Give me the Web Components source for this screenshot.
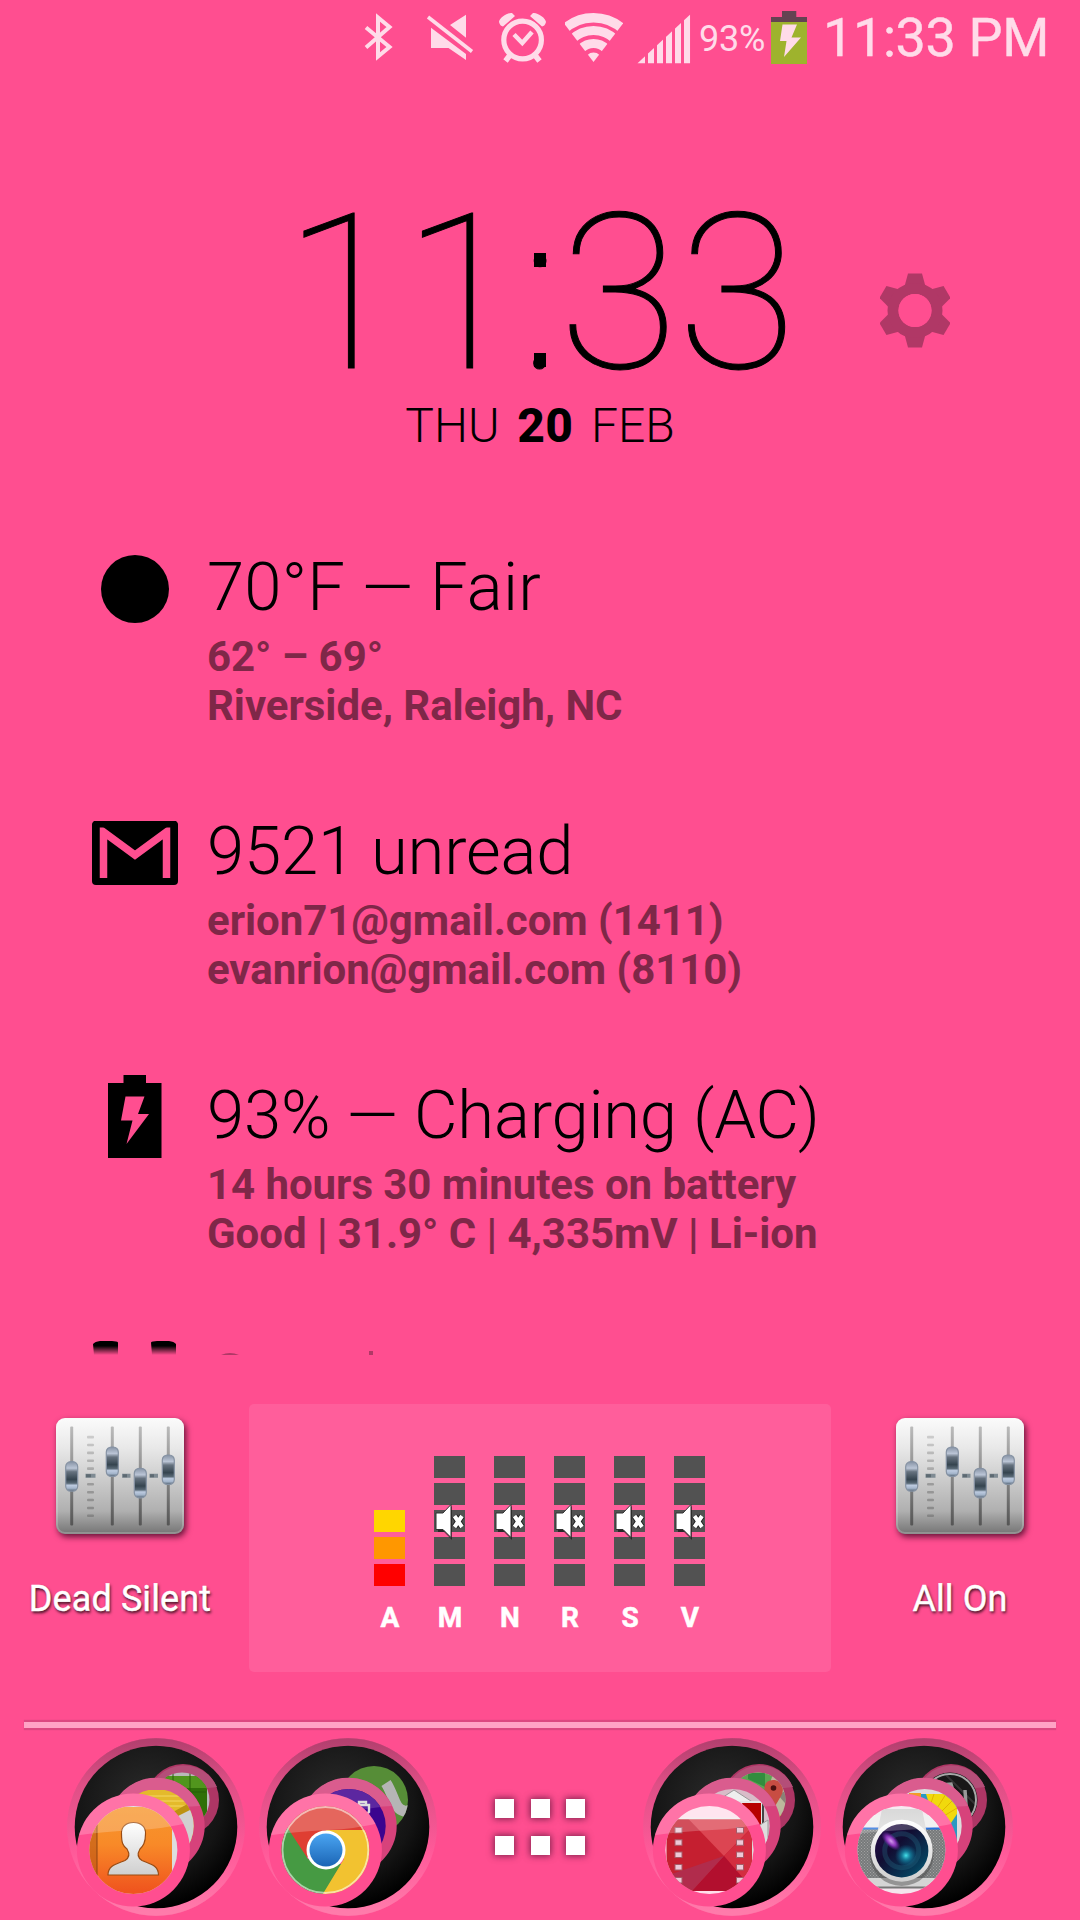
<!DOCTYPE html>
<html lang="en">
<head>
<meta charset="utf-8">
<title>Home screen</title>
<style>
  body {
    margin: 0;
    background: #ff4e90;
    font-family: Roboto, "Noto Sans", sans-serif;
  }
</style>
</head>
<body>
<home-screen></home-screen>

<script>
class StatusBar extends HTMLElement {
  constructor() {
    super();
    this.attachShadow({ mode: 'open' });
  }

  connectedCallback() {
    this.shadowRoot.innerHTML = `
      <style>
        :host {
          display: flex;
          height: 76px;
          padding-left: 364px;
          color: #ffdbe9;
          white-space: nowrap;
        }
        svg { display: block; flex: none; height: 76px; }
        .level { width: 71px; margin-left: 8px; font-size: 36px; line-height: 79px; letter-spacing: -0.2px; }
        .time { margin-left: 16px; font-size: 54px; line-height: 75px; letter-spacing: -0.4px; -webkit-text-stroke: 0.4px currentColor; }
      </style>
      <svg width="30" viewBox="364 0 30 76" fill="none" stroke="currentColor" stroke-width="4">
        <path d="M366 27.5 389.500 47 378 56.500V17.500L389.500 27 366 47.500"/>
      </svg>
      <svg width="48" style="margin-left:32px" viewBox="426 0 48 76" fill="currentColor">
        <path d="M450 25 466 14.700V37.700ZM431 27.700 466 54V60L448.500 48H431Z"/>
        <path d="M428 17 472 51.500" stroke="currentColor" stroke-width="3.600"/>
      </svg>
      <svg width="48" style="margin-left:24px" viewBox="498 0 48 76" fill="none" stroke="currentColor">
        <circle cx="522.600" cy="40" r="18.800" stroke-width="5.200"/>
        <path d="M514 34.500 522.300 43 532 32" stroke-width="4.500"/>
        <path d="M510.500 54.500 505.500 61M534.500 54.500 539.500 61" stroke-width="5.500"/>
        <path d="M499 22C499 18 508 12 512 13L515 16 503 26.500Q500 26 499 22ZM546 22C546 18 537 12 533 13L530 16 542 26.500Q545 26 546 22Z" fill="currentColor" stroke="none"/>
      </svg>
      <svg width="58" style="margin-left:19px" viewBox="565 0 58 76" fill="none" stroke="currentColor">
        <clipPath id="fan"><path d="M593.500 62 557.500 15V5H629.500V15Z"/></clipPath>
        <g clip-path="url(#fan)">
          <circle cx="593.500" cy="61" r="43.300" stroke-width="9.400"/>
          <circle cx="593.500" cy="61" r="30.500" stroke-width="9"/>
          <circle cx="593.500" cy="61" r="17.500" stroke-width="9"/>
          <circle cx="593.500" cy="61" r="8.500" fill="currentColor" stroke="none"/>
        </g>
      </svg>
      <svg width="54" style="margin-left:14px" viewBox="637 0 54 76" fill="currentColor">
        <clipPath id="ramp"><path d="M637.500 63.200 690.200 14.500V63.200Z"/></clipPath>
        <path clip-path="url(#ramp)" d="M637 0h8v64h-8zM648 0h6v64h-6zM657 0h6v64h-6zM666 0h6v64h-6zM675 0h6v64h-6zM684 0h6.200v64h-6.200z"/>
      </svg>
      <span class="level">93%</span>
      <svg width="36" style="margin-left:1px" viewBox="771 0 36 76">
        <path fill="#644352" d="M782 11h14.300v6H807v5H771v-5h11z"/>
        <path fill="#9eb32d" d="M771 22h36v42h-36z"/>
        <path fill="#ffdbe9" d="M782.500 24.500H797L791.500 37.500H801L784 57 786.500 41H780Z"/>
      </svg>
      <span class="time">11:33 PM</span>
    `;
  }
}

class ClockFace extends HTMLElement {
  constructor() {
    super();
    this.attachShadow({ mode: 'open' });
  }

  connectedCallback() {
    this.shadowRoot.innerHTML = `
      <style>
        :host { display: block; height: 349px; padding-top: 109px; color: #000; white-space: nowrap; }
        .row { display: flex; align-items: flex-start; padding-left: 284px; }
        .time {
          width: 596px;
          font-size: 218px;
          line-height: 218px;
          font-weight: 100;
          letter-spacing: -0.8px;
          -webkit-text-stroke: 1px #000;
        }
        /* square off the dots of the colon */
        .colon {
          background:
            linear-gradient(#000, #000) center 87px / 12px 14px no-repeat,
            linear-gradient(#000, #000) center 187px / 12px 14px no-repeat;
        }
        .date { margin-top: -1px; text-align: center; font-size: 48px; line-height: 48px; font-weight: 300; word-spacing: 6px; }
        b { font-weight: 800; letter-spacing: 0.3px; }
        svg { display: block; margin-top: 88px; }
      </style>
      <div class="row">
        <div class="time">11<span class="colon">:</span>33</div>
        <svg width="70" height="75" viewBox="-35 -37.500 70 75" fill="#b03866">
          <path id="tooth" d="M-7-37H7L10.500-24 0-18-10.500-24Z"/>
          <use href="#tooth" transform="rotate(60)"/>
          <use href="#tooth" transform="rotate(120)"/>
          <use href="#tooth" transform="rotate(180)"/>
          <use href="#tooth" transform="rotate(240)"/>
          <use href="#tooth" transform="rotate(300)"/>
          <circle r="22" fill="none" stroke="#b03866" stroke-width="11"/>
          <circle r="16.500" fill="#ff4e90"/>
        </svg>
      </div>
      <div class="date">THU <b>20</b> FEB</div>
    `;
  }
}

class InfoRow extends HTMLElement {
  constructor() {
    super();
    this.attachShadow({ mode: 'open' });
  }

  connectedCallback() {
    this.shadowRoot.innerHTML = `
      <style>
        :host {
          display: grid;
          grid-template-columns: 135px 1fr;
          height: 264px;
          padding-left: 72px;
          white-space: nowrap;
        }
        .icon { display: flex; justify-content: center; height: 69px; align-items: center; width: 126px; }
        .title { font-size: 67px; line-height: 67px; font-weight: 300; color: #000; letter-spacing: var(--title-spacing, 0); }
        .details { margin-top: 11px; font-size: 42px; line-height: 49px; font-weight: 700; color: #7f2748; letter-spacing: -0.05px; }
        ::slotted(*) { display: block; flex: none; }
      </style>
      <div class="icon"><slot name="icon"></slot></div>
      <div>
        <div class="title"><slot name="title"></slot></div>
        <div class="details"><slot></slot></div>
      </div>
    `;
  }
}

class MixerShortcut extends HTMLElement {
  constructor() {
    super();
    this.attachShadow({ mode: 'open' });
  }

  connectedCallback() {
    const knobs = [[15.700, 43.700], [56.300, 29], [84.300, 50.300], [112.300, 37]];
    const ticks = [0, 1, 2, 3, 4, 6, 7, 8, 9, 10];
    this.shadowRoot.innerHTML = `
      <style>
        :host { display: flex; flex-direction: column; align-items: center; padding-top: 14px; }
        svg { display: block; overflow: visible; filter: drop-shadow(2px 3px 3px rgba(50, 0, 25, 0.75)); }
        .label {
          margin-top: 47px;
          font-size: 36px;
          line-height: 36px;
          color: #fff;
          letter-spacing: 0.1px;
          white-space: nowrap;
          -webkit-text-stroke: 0.4px #fff;
          text-shadow: 1px 2px 3px rgba(0, 0, 0, 0.8);
        }
      </style>
      <svg width="128" height="116" viewBox="0 0 128 116">
        <defs>
          <linearGradient id="plate" x2="0" y2="1">
            <stop offset="0" stop-color="#fbfbfb"/><stop offset=".25" stop-color="#e9e9e9"/>
            <stop offset=".8" stop-color="#b0b0b0"/><stop offset="1" stop-color="#747474"/>
          </linearGradient>
          <linearGradient id="knob" x2="0" y2="1">
            <stop offset="0" stop-color="#8793a5"/><stop offset=".22" stop-color="#bbc5d6"/>
            <stop offset=".34" stop-color="#66727f"/><stop offset=".6" stop-color="#35444f"/>
            <stop offset=".73" stop-color="#596976"/><stop offset=".8" stop-color="#bdcbe0"/>
            <stop offset=".9" stop-color="#a4b5cb"/><stop offset="1" stop-color="#536373"/>
          </linearGradient>
          <linearGradient id="rail" x2="0" y2="1">
            <stop offset="0" stop-color="#bbb"/><stop offset="1" stop-color="#555"/>
          </linearGradient>
        </defs>
        <rect width="128" height="116" rx="9" fill="url(#plate)"/>
        <rect x="1" y="1" width="126" height="114" rx="8" fill="none" stroke="#fff" stroke-opacity=".2" stroke-width="2"/>
        ${ticks.map((i) => `<rect x="31" y="${17.800 + i * 7.870}" width="7" height="2.600" rx="1" fill="#777" opacity="${0.3 + i * 0.04}"/>`).join('')}
        <path d="M29.500 57.700h10M66 57.700h8.500M93.500 57.700h8.500" stroke="#7f8b93" stroke-width="4"/>
        <path d="M30 57.700h5M67 57.700h4M94 57.700h4" stroke="#5d6a72" stroke-width="3"/>
        ${knobs.map(([x, y]) => `
          <rect x="${x - 1.500}" y="8.500" width="3" height="99" rx="1" fill="url(#rail)"/>
          <rect x="${x - 6}" y="${y}" width="12" height="29.500" rx="5" fill="url(#knob)" stroke="#8592a3" stroke-width="1.200"/>
        `).join('')}
      </svg>
      <div class="label"><slot></slot></div>
    `;
  }
}

class VolumeMeter extends HTMLElement {
  constructor() {
    super();
    this.attachShadow({ mode: 'open' });
  }

  connectedCallback() {
    const muted = this.hasAttribute('muted');
    const colors = muted
      ? ['#525252', '#525252', '#525252', '#525252', '#525252']
      : ['transparent', 'transparent', '#ffd600', '#ff9700', '#ff0000'];
    this.shadowRoot.innerHTML = `
      <style>
        :host { display: block; width: 31px; }
        .stack { display: grid; gap: 5px; position: relative; }
        .stack i { height: 22px; }
        .label {
          margin: 18px -10px 0 -8px;
          text-align: center;
          font-size: 28px;
          line-height: 28px;
          font-weight: 700;
          color: #fff;
          -webkit-text-stroke: 0.5px #fff;
        }
        svg { position: absolute; left: 0; top: 46px; }
      </style>
      <div class="stack">
        ${colors.map((color) => `<i style="background:${color}"></i>`).join('')}
        ${muted ? `
          <svg width="34" height="40" viewBox="0 0 34 40">
            <path d="M3 11H9L17 3V37L9 29H3Z" fill="#000" opacity=".5" transform="translate(1 1)"/>
            <path d="M2 11H9L17 2.500V35.500L9 27.500H2Z" fill="#fff" stroke="#333" stroke-width="1"/>
            <path d="M20.500 14 28 25M28 14 20.500 25" stroke="#222" stroke-width="6"/>
            <path d="M20.500 14 28 25M28 14 20.500 25" stroke="#fff" stroke-width="4"/>
          </svg>` : ''}
      </div>
      <div class="label"><slot></slot></div>
    `;
  }
}

// Artwork of each folder, back to front; every disc is clipped by its own circle
const folderArt = {
  people: {
    back: `<path fill="#b9b9b9" d="M90 35h55v55H90z"/><rect x="88" y="39" width="53" height="60" rx="6" fill="#2f7008"/>
      <path fill="#51951d" d="M88 39h53v12H88z"/><path d="M107 36v50M124 36v50M90 55h50" stroke="#265c08"/>`,
    middle: `<path fill="#e4ba2b" d="M60 53h70v60H60z"/><path d="M60 59h65M60 64h65M60 69h65" stroke="#f5d764"/>
      <path fill="#bd9211" d="M98 80 125 65V80L107 83z"/><path fill="#d0d0d0" d="M102 84 130 70V120H90z"/>`,
    front: `<path fill="#ddd" d="M20 65h100v95H20z"/><path fill="url(#orange)" d="M20 70h84q2 0 2 3v90H20z"/>
      <path fill="#b45612" opacity=".55" d="M20 70h11v90H20z"/><path d="M31 70v90" stroke="#8e4512"/>
      <path d="M67.500 85.500C75 85.500 80 90 79.500 97 79.500 106 77 109 74 112 71 117 72 121 76 123.500 84 127 92.500 128 92.500 138H42C42 128 51 127 59 123.500 63 121 64 117 61 112 57 109 55.500 106 55.500 97 55 90 60 85.500 67.500 85.500Z" fill="url(#silver)" stroke="#9a4c13" stroke-width="1.200"/>`
  },
  web: {
    backPlain: true,
    back: `<path fill="#568d37" d="M70 20h90v90H70z"/><path d="M128 46C136 58 136 72 146 74 150 75 155 72 158 68" stroke="#b5b5b5" stroke-width="11" fill="none"/>`,
    middle: `<path fill="#3b048f" d="M40 40h100v100H40z"/><path fill="#5c27a0" d="M40 40h100v28Q100 72 80 78H40z"/>
      <path d="M96 68h15v7l-6 5M101 68v-3h7v3" fill="none" stroke="#ddd" stroke-width="2.400"/>`,
    front: `<path fill="#df3e32" d="M20 60h100v60H20z"/><path fill="#f2c230" d="M68 93H120V160H62L86 122Z"/>
      <path fill="#469a43" d="M20 78 29 90 50 122 83 127 63 160H20Z"/>
      <circle cx="68" cy="113" r="19.500" fill="#fff"/><circle cx="68" cy="113" r="16.500" fill="url(#blue)"/>
      <circle cx="67.400" cy="113" r="43" fill="none" stroke="#fff" stroke-opacity=".55" stroke-width="2"/>`
  },
  media: {
    back: `<path fill="#bcb79c" d="M80 30h80v80H80z"/><path fill="#5ca653" d="M80 30h53l-8 26-20 10z"/>
      <path fill="#328d3e" d="M106 36h17v14l-17-8z"/><path fill="#c3b238" d="M130 84 150 70V95H128z"/><path fill="#8a8276" d="M136 58 150 50V74z"/>
      <path fill="#c84d43" d="M131 43c10 0 12 10 8 16l-7 12-7-12c-5-7-3-16 6-16z"/><circle cx="131.500" cy="51" r="2.800" fill="#4c1010"/>`,
    middle: `<path fill="#d8bcc8" d="M40 40h100v100H40z"/><path fill="#eee" stroke="#999" d="M72 66 92 53 112 66z"/>
      <path fill="#e5e5e5" d="M90 64h31v30h-20z"/><path fill="#b70000" d="M100 66h19v24h-12z"/>
      <path d="M121 64v22" stroke="#444" stroke-width="2"/><path fill="#ddd" stroke="#999" d="M105 96 126 83V125z"/>`,
    front: `<path fill="#ffdfeb" d="M20 60h100v100H20z"/><path fill="#c51f30" d="M24.500 81.500h86V154h-86z"/>
      <path fill="#dc4552" d="M46 81.500h64.500v8L82 119z"/><path fill="#d32d40" d="M82 119 110.500 90v62z"/><path fill="#b20f2e" d="M82 119 112 154H50z"/>
      <path fill="#a93255" opacity=".75" d="M24 139 82 119 50 154H24z"/><path d="M25 81.500h85" stroke="#eee" stroke-width="1.500"/>
      <path d="M111 90v50" stroke="#ddd" stroke-width="2"/>
      ${[90.500, 102.800, 115, 127.500, 140.500].map((y) => `<rect x="33" y="${y}" width="7" height="5.500" fill="#edc8d7" stroke="#a55b66"/><rect x="94.500" y="${y}" width="7" height="5.500" fill="#edc8d7" stroke="#a55b66"/>`).join('')}`
  },
  camera: {
    back: `<path fill="#181818" d="M70 20h90v90H70z"/><path d="M90 45 135 90M98 38 143 83M110 36 145 71M84 54 120 90" stroke="#333" stroke-width="2"/>
      <circle cx="116" cy="63" r="26" fill="none" stroke="#a8a8a8" stroke-width="2"/>
      <path d="M105 48 117 47 119 54M131 53 132 68" fill="none" stroke="#999" stroke-width="3.500"/>`,
    middle: `<path fill="#ddd" d="M40 40h100v100H40z"/><path fill="#299ac2" d="M70 57h53v55H80z"/><path fill="#f29b27" d="M75 56h12v12H75z"/>
      <path fill="#f1d90d" d="M92 57h31v20l-8 12-14-3z"/><path d="M103 79 122 60M100 76 112 57M105 82 123 71M96 69 100 57" stroke="#e2b400"/>`,
    front: `<path fill="#f4e5ed" d="M20 60h100v100H20z"/><path fill="#777a7b" d="M20 92h100v50H20z"/>
      <path fill="url(#mesh)" d="M20 92h100v50H20z"/><path fill="#eee" d="M20 78h95v12H20z"/><path d="M24 91.500h88" stroke="#2673dd" stroke-width="2"/>
      <path fill="url(#hump)" d="M48 72h40l5 25H43z"/><path fill="#d5d5d5" d="M25 141h87v9H25z"/><path d="M30 150.500h75" stroke="#777" stroke-width="2"/>
      <circle cx="67.700" cy="117" r="32" fill="#444" opacity=".45"/><circle cx="67.700" cy="113.700" r="31" fill="url(#silver)"/>
      <circle cx="67.700" cy="113.700" r="26.700" fill="url(#lens)"/>
      <circle cx="67.700" cy="113.700" r="17" fill="none" stroke="#266882" stroke-opacity=".35" stroke-width="5"/>
      <ellipse cx="57" cy="104" rx="12" ry="6" transform="rotate(45 57 104)" fill="url(#violet)"/>
      <circle cx="72" cy="118.500" r="11" fill="url(#cyan)"/>`
  }
};

class AppFolder extends HTMLElement {
  constructor() {
    super();
    this.attachShadow({ mode: 'open' });
  }

  connectedCallback() {
    const art = folderArt[this.getAttribute('kind')];
    this.shadowRoot.innerHTML = `
      <style>
        :host { display: block; width: 180px; height: 180px; }
        svg { display: block; }
      </style>
      <svg width="180" height="180" viewBox="0 0 180 180">
        <defs>
          <radialGradient id="well" cx=".45" cy=".35" r=".65"><stop offset="0" stop-color="#2c2c2c"/><stop offset=".7" stop-color="#141414"/><stop offset="1" stop-color="#000"/></radialGradient>
          <linearGradient id="rim" x2="0" y2="1"><stop offset="0" stop-color="#b4406f"/><stop offset=".25" stop-color="#df4f86"/><stop offset=".65" stop-color="#ff5a99"/><stop offset="1" stop-color="#ff7bab"/></linearGradient>
          <linearGradient id="orange" x2="0" y2="1"><stop offset="0" stop-color="#f7962c"/><stop offset=".4" stop-color="#f88a28"/><stop offset=".9" stop-color="#f0551e"/></linearGradient>
          <linearGradient id="silver" x2="0" y2="1"><stop offset="0" stop-color="#fff"/><stop offset="1" stop-color="#cfcfcf"/></linearGradient>
          <linearGradient id="hump" x2="0" y2="1"><stop offset="0" stop-color="#cfcfcf"/><stop offset="1" stop-color="#dedede"/></linearGradient>
          <linearGradient id="blue" x2="0" y2="1"><stop offset="0" stop-color="#4aa5f2"/><stop offset="1" stop-color="#1b65b5"/></linearGradient>
          <linearGradient id="lens" x2="1" y2="1"><stop offset="0" stop-color="#2a0c50"/><stop offset=".4" stop-color="#120d32"/><stop offset=".8" stop-color="#063e5c"/><stop offset="1" stop-color="#0d6a82"/></linearGradient>
          <radialGradient id="violet"><stop offset="0" stop-color="#d59bf0"/><stop offset=".5" stop-color="#8c35bb"/><stop offset="1" stop-color="#61229c" stop-opacity="0"/></radialGradient>
          <radialGradient id="cyan"><stop offset="0" stop-color="#45e3ec"/><stop offset=".4" stop-color="#168ba8" stop-opacity=".8"/><stop offset="1" stop-color="#136a93" stop-opacity="0"/></radialGradient>
          <pattern id="mesh" width="3" height="3" patternUnits="userSpaceOnUse"><path fill="#a2a2a2" d="M0 0h1v1H0zM1.500 1.500h1v1h-1z"/></pattern>
          <clipPath id="backDisc"><circle cx="116" cy="63" r="${art.backPlain ? 34 : 27.500}"/></clipPath>
          <clipPath id="middleDisc"><circle cx="90.700" cy="89" r="37"/></clipPath>
          <clipPath id="frontDisc"><circle cx="67.400" cy="113" r="44"/></clipPath>
          <clipPath id="frontRing"><circle cx="67.400" cy="113" r="56.500"/></clipPath>
        </defs>
        <circle cx="90" cy="90" r="85" fill="none" stroke="url(#rim)" stroke-width="7.500"/>
        <circle cx="90" cy="90" r="88.500" fill="none" stroke="url(#rim)" stroke-width="1" opacity=".5"/>
        <circle cx="90" cy="90" r="81.300" fill="url(#well)"/>
        ${art.backPlain ? '' : '<circle cx="117" cy="63" r="36" fill="#ae3665"/><path d="M83 56A36 36 0 0 1 151 50Q120 52 83 66Z" fill="#b44e78"/>'}
        <g clip-path="url(#backDisc)">${art.back}</g>
        <circle cx="90.700" cy="89" r="48" fill="#d7427b"/>
        <path d="M43 80A48 48 0 0 1 134 69Q90 70 43 84Z" fill="#da5c8e"/>
        <g clip-path="url(#middleDisc)">${art.middle}</g>
        <circle cx="67.400" cy="113" r="56.500" fill="#ff4e90"/>
        <g clip-path="url(#frontDisc)">${art.front}</g>
        <path clip-path="url(#frontRing)" d="M0 50H130V84Q100 92 70 93 30 95 0 100Z" fill="#fff" opacity=".21"/>
      </svg>
    `;
  }
}

class DockBar extends HTMLElement {
  constructor() {
    super();
    this.attachShadow({ mode: 'open' });
  }

  connectedCallback() {
    this.shadowRoot.innerHTML = `
      <style>
        :host { display: block; }
        .line { height: 6px; margin: 0 24px; background: #ffa3c5; box-shadow: 0 2px 1px #dc4880, 0 -2px 1px #dc4880; }
        .row { display: grid; grid-template-columns: 192px 192px 192px 192px 180px; padding: 9px 66px 0; }
        .apps {
          display: grid;
          grid-template-columns: repeat(3, 19px);
          grid-auto-rows: 19px;
          gap: 18px 16.500px;
          padding: 62px 0 0 45px;
        }
        .apps i { background: #fff; box-shadow: 0 0 7px 1px rgba(70, 15, 45, 0.7); }
      </style>
      <div class="line"></div>
      <div class="row">
        <app-folder kind="people"></app-folder>
        <app-folder kind="web"></app-folder>
        <div class="apps"><i></i><i></i><i></i><i></i><i></i><i></i></div>
        <app-folder kind="media"></app-folder>
        <app-folder kind="camera"></app-folder>
      </div>
    `;
  }
}

class HomeScreen extends HTMLElement {
  constructor() {
    super();
    this.attachShadow({ mode: 'open' });
  }

  connectedCallback() {
    this.shadowRoot.innerHTML = `
      <style>
        :host { display: flex; flex-direction: column; width: 1080px; height: 1920px; overflow: hidden; }
        status-bar, clock-face, .list, .shortcuts, dock-bar { flex: none; }
        .list { height: 787px; padding-top: 20px; }
        .next { display: block; flex: none; }
        .shortcuts { display: grid; grid-template-columns: 249px 582px 249px; height: 268px; margin-top: 48px; }
        .shortcuts mixer-shortcut:first-child { padding-right: 9px; }
        .shortcuts mixer-shortcut:last-child { padding-left: 9px; }
        .meters {
          display: flex;
          justify-content: center;
          gap: 29px;
          padding: 52px 2px 0 0;
          background: #ff5e9b;
          border-radius: 5px;
        }
        dock-bar { margin-top: 50px; }
      </style>
      <status-bar></status-bar>
      <clock-face></clock-face>
      <div class="list">
        <info-row style="--title-spacing:0.2px">
          <svg slot="icon" width="70" height="70" viewBox="0 0 70 70"><circle cx="35" cy="35" r="34"/></svg>
          <span slot="title">70°F — Fair</span>
          <div>62° – 69°</div>
          <div>Riverside, Raleigh, NC</div>
        </info-row>
        <info-row style="--title-spacing:-0.2px">
          <svg slot="icon" width="86" height="64" viewBox="0 0 86 64">
            <rect width="86" height="64" rx="4"/>
            <path d="M11.500 57V11L43 34 74.500 11V57" fill="none" stroke="#ff4e90" stroke-width="7.500"/>
            <path d="M2 0H84L86 4V6.500H0V4Z"/>
          </svg>
          <span slot="title">9521 unread</span>
          <div>erion71@gmail.com (1411)</div>
          <div>evanrion@gmail.com (8110)</div>
        </info-row>
        <info-row style="--title-spacing:-0.2px">
          <svg slot="icon" width="54" height="84" viewBox="0 0 54 84">
            <path d="M15.500 0H38V8H53.500V83H0V8H15.500Z"/>
            <path d="M17.500 21.500H36.500L30 39H41L18.500 69 24.500 45.500H13Z" fill="#ff4e90"/>
          </svg>
          <span slot="title">93% — Charging (AC)</span>
          <div>14 hours 30 minutes on battery</div>
          <div>Good | 31.9° C | 4,335mV | Li-ion</div>
        </info-row>
      </div>
      <svg class="next" width="1080" height="15" viewBox="0 1341 1080 15">
        <linearGradient id="fade" x2="0" y2="1"><stop offset=".35" stop-color="#000"/><stop offset="1" stop-color="#000" stop-opacity="0"/></linearGradient>
        <path fill="url(#fade)" d="M93 1344Q95 1341.500 100 1341H112Q117 1341 118 1342.500V1355H94ZM151 1342.500Q152 1341 157 1341H169Q174 1341.500 176 1344V1355H152Z"/>
        <path fill="#b03866" d="M221 1355Q230 1351 239 1355ZM369 1351H373V1355H369Z"/>
      </svg>
      <div class="shortcuts">
        <mixer-shortcut>Dead Silent</mixer-shortcut>
        <div class="meters">
          <volume-meter>A</volume-meter>
          <volume-meter muted>M</volume-meter>
          <volume-meter muted>N</volume-meter>
          <volume-meter muted>R</volume-meter>
          <volume-meter muted>S</volume-meter>
          <volume-meter muted>V</volume-meter>
        </div>
        <mixer-shortcut>All On</mixer-shortcut>
      </div>
      <dock-bar></dock-bar>
    `;
  }
}

customElements.define('status-bar', StatusBar);
customElements.define('clock-face', ClockFace);
customElements.define('info-row', InfoRow);
customElements.define('mixer-shortcut', MixerShortcut);
customElements.define('volume-meter', VolumeMeter);
customElements.define('app-folder', AppFolder);
customElements.define('dock-bar', DockBar);
customElements.define('home-screen', HomeScreen);
</script>
</body>
</html>
